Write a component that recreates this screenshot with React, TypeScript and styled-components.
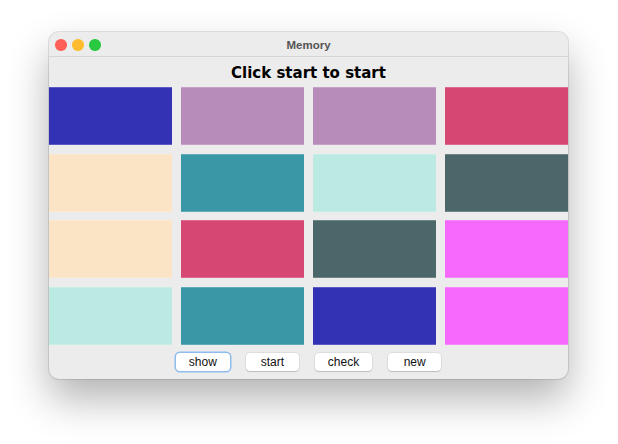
import React from 'react'
import styled, { createGlobalStyle } from 'styled-components'

const GlobalStyle = createGlobalStyle`
  body {
    margin: 0;
    background: #ffffff;
    font-family: "Liberation Sans", Arial, sans-serif;
  }
`

const tiles = [
  '#3332b4', '#b78bba', '#b78bba', '#d64774',
  '#fbe4c5', '#3a97a5', '#bbeae3', '#4c6769',
  '#fbe4c5', '#d64774', '#4c6769', '#f56afd',
  '#bbeae3', '#3a97a5', '#3332b4', '#f56afd',
]

const buttons = ['show', 'start', 'check', 'new']

function App() {
  return (
    <>
      <GlobalStyle />
      <Page>
        <Window>
          <TitleBar>
            <Lights>
              <Light color="#fe5f57" />
              <Light color="#febc2e" />
              <Light color="#28c840" />
            </Lights>
            <Title>Memory</Title>
          </TitleBar>
          <Heading>Click start to start</Heading>
          <Board>
            {tiles.map((c, i) => (
              <Tile key={i} color={c} />
            ))}
          </Board>
          <Controls>
            {buttons.map((b, i) => (
              <Button key={b} focused={i === 0}>
                {b}
              </Button>
            ))}
          </Controls>
        </Window>
      </Page>
    </>
  )
}

export default App

const Page = styled.div`
  padding: 32px 0 64px 49px;
`

const Window = styled.div`
  width: 519px;
  height: 347px;
  background: #ececec;
  border-radius: 10px;
  overflow: hidden;
  box-shadow: 0 0 0 1px rgba(0, 0, 0, 0.1), 0 20px 40px rgba(0, 0, 0, 0.3);
  display: flex;
  flex-direction: column;
`

const TitleBar = styled.div`
  position: relative;
  height: 24px;
  border-bottom: 1px solid #d5d5d5;
  display: flex;
  align-items: center;
  justify-content: center;
`

const Lights = styled.div`
  position: absolute;
  left: 6px;
  top: 7px;
  display: flex;
  gap: 5.5px;
`

const Light = styled.span<{ color: string }>`
  width: 11.5px;
  height: 11.5px;
  border-radius: 50%;
  background: ${p => p.color};
`

const Title = styled.div`
  font-size: 11.5px;
  font-weight: bold;
  color: #555555;
  padding-top: 1px;
`

const Heading = styled.div`
  height: 29px;
  display: flex;
  align-items: center;
  justify-content: center;
  padding-top: 1px;
  font-family: "DejaVu Sans", Verdana, sans-serif;
  font-size: 15px;
  font-weight: bold;
  color: #000;
`

const Board = styled.div`
  display: grid;
  grid-template-columns: repeat(4, 123px);
  grid-auto-rows: 58px;
  column-gap: 9px;
  row-gap: 8.67px;
`

const Tile = styled.div<{ color: string }>`
  background: ${p => p.color};
  box-shadow: inset 0 1px 0 rgba(255, 255, 255, 0.2), inset 0 -1px 0 rgba(255, 255, 255, 0.2);
`

const Controls = styled.div`
  display: flex;
  justify-content: center;
  gap: 16px;
  padding: 8px 0 0 0;
`

const Button = styled.button<{ focused?: boolean }>`
  height: 18px;
  padding: 0 13px;
  min-width: 53px;
  font-family: "Liberation Sans", Arial, sans-serif;
  font-size: 12px;
  color: #111;
  background: #ffffff;
  border: none;
  border-radius: 4px;
  box-shadow: ${p =>
    p.focused
      ? '0 0 0 1.5px #8fbcee'
      : '0 0 0 0.5px rgba(0,0,0,0.12), 0 1px 1px rgba(0,0,0,0.15)'};
  line-height: 18px;
`
